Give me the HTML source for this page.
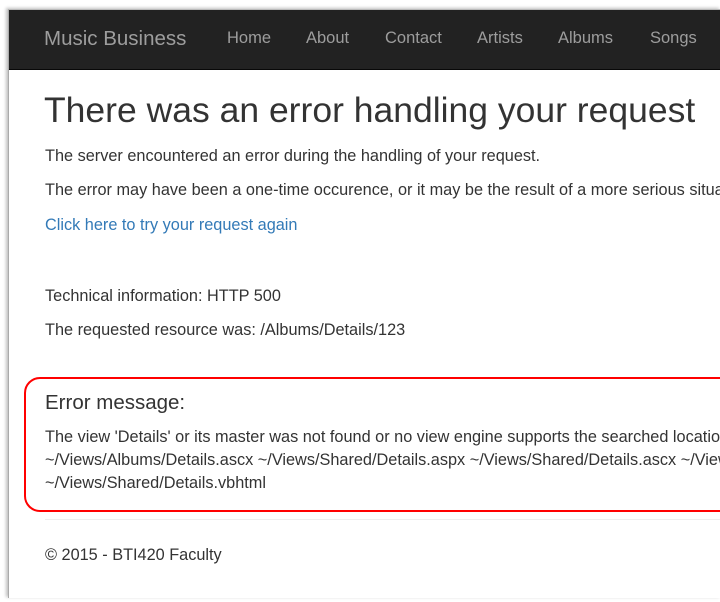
<!DOCTYPE html>
<html><head><meta charset="utf-8"><style>
html,body{margin:0;padding:0;background:#fff;width:720px;height:602px;overflow:hidden;font-family:"Liberation Sans",Arial,sans-serif;}
#frame{position:absolute;left:8px;top:9px;width:712px;height:588px;border-left:1px solid #aaa;border-top:1px solid #bbb;background:#fff;box-shadow:-2px -1px 3px rgba(0,0,0,.25);overflow:hidden;}
#nav{position:absolute;left:0;top:0;right:0;height:59px;background:#222;border-bottom:1px solid #080808;}
#nav span{position:absolute;top:19px;color:#9d9d9d;font-size:16.5px;}
#nav .brand{font-size:20.5px;top:17px;}
.c{position:absolute;left:36px;color:#333;font-size:16.3px;white-space:nowrap;}
h1{position:absolute;left:35px;top:80px;margin:0;font-weight:normal;font-size:35.5px;color:#333;white-space:nowrap;}
a{color:#337ab7;text-decoration:none;}
#box{position:absolute;left:15px;top:367px;width:760px;height:131px;border:2px solid #f00;border-radius:16px;}
#hr{position:absolute;left:36px;top:509px;width:700px;height:1px;background:#eee;}
</style></head><body>
<div id="frame">
<div id="nav">
<span class="brand" style="left:35px">Music Business</span>
<span style="left:218px">Home</span>
<span style="left:297px">About</span>
<span style="left:376px">Contact</span>
<span style="left:468px">Artists</span>
<span style="left:549px">Albums</span>
<span style="left:641px">Songs</span>
</div>
<h1>There was an error handling your request</h1>
<div class="c" style="top:137px">The server encountered an error during the handling of your request.</div>
<div class="c" style="top:171px">The error may have been a one-time occurence, or it may be the result of a more serious situation</div>
<div class="c" style="top:206px"><a>Click here to try your request again</a></div>
<div class="c" style="top:277px">Technical information: HTTP 500</div>
<div class="c" style="top:311px">The requested resource was: /Albums/Details/123</div>
<div id="box"></div>
<div class="c" style="top:381px;font-size:20.5px">Error message:</div>
<div class="c" style="top:418px;font-size:16.3px">The view 'Details' or its master was not found or no view engine supports the searched locations</div>
<div class="c" style="top:441px;font-size:16.3px">~/Views/Albums/Details.ascx ~/Views/Shared/Details.aspx ~/Views/Shared/Details.ascx ~/Views/Shared</div>
<div class="c" style="top:464px;font-size:16.3px">~/Views/Shared/Details.vbhtml</div>
<div id="hr"></div>
<div class="c" style="top:536px">© 2015 - BTI420 Faculty</div>
</div>
</body></html>
